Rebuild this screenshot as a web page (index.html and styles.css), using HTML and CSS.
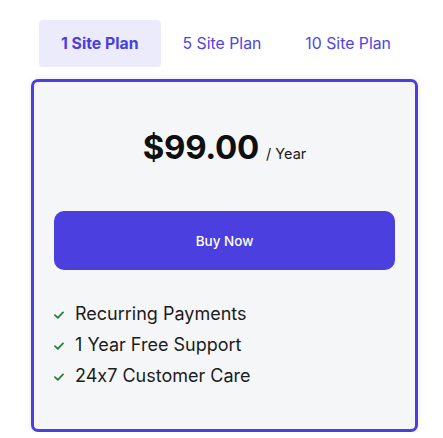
FILE: index.html
```html
<!DOCTYPE html>
<html>
<head>
<meta charset="utf-8">
<link rel="stylesheet" href="styles.css">
</head>
<body>
<div class="wrap">
  <div class="tabs">
    <div class="tab active">1 Site Plan</div>
    <div class="tab">5 Site Plan</div>
    <div class="tab">10 Site Plan</div>
  </div>
  <div class="card">
    <div class="price"><span class="amount">$99.00</span><span class="per">/ Year</span></div>
    <button class="buy">Buy Now</button>
    <ul class="features">
      <li><svg class="check" viewBox="0 0 10 8" width="10" height="8"><path d="M1 4.2 L3.8 6.8 L9 1.4" fill="none" stroke="#23803a" stroke-width="1.8" stroke-linecap="round" stroke-linejoin="round"/></svg>Recurring Payments</li>
      <li><svg class="check" viewBox="0 0 10 8" width="10" height="8"><path d="M1 4.2 L3.8 6.8 L9 1.4" fill="none" stroke="#23803a" stroke-width="1.8" stroke-linecap="round" stroke-linejoin="round"/></svg>1 Year Free Support</li>
      <li><svg class="check" viewBox="0 0 10 8" width="10" height="8"><path d="M1 4.2 L3.8 6.8 L9 1.4" fill="none" stroke="#23803a" stroke-width="1.8" stroke-linecap="round" stroke-linejoin="round"/></svg>24x7 Customer Care</li>
    </ul>
  </div>
</div>
</body>
</html>
```
FILE: styles.css
```css
html, body {
  margin: 0;
  padding: 0;
  background: #ffffff;
}
body {
  font-family: "Inter", "Noto Sans", sans-serif;
  font-feature-settings: "calt" 0;
  color: #1a1a1a;
}
.wrap {
  width: 387px;
  margin-left: 31px;
  padding-top: 20px;
}
.tabs {
  display: flex;
  justify-content: center;
  margin-left: 3px;
}
.tab {
  height: 47px;
  line-height: 47px;
  padding: 0 22px;
  border-radius: 4px;
  font-size: 15.8px;
  color: #4f44df;
}
.tab.active {
  background: #ecebfb;
  font-weight: 700;
  color: #4a3fdd;
}
.card {
  margin-top: 12px;
  box-sizing: border-box;
  height: 353px;
  border: 3px solid #4b3fe0;
  border-radius: 7px;
  background: #f5f6f7;
  padding: 0 20px;
  box-shadow: 0 0 8px rgba(0,0,0,0.08);
}
.price {
  text-align: center;
  margin-top: 45px;
  height: 40px;
  line-height: 40px;
}
.amount {
  font-size: 33px;
  font-weight: 700;
  color: #0f0f0f;
  letter-spacing: -0.3px;
}
.per {
  font-size: 14.5px;
  color: #1a1a1a;
  margin-left: 7px;
}
.buy {
  display: block;
  width: 100%;
  height: 59px;
  margin-top: 44px;
  border: none;
  border-radius: 10px;
  background: #4b3fe0;
  color: #ffffff;
  font-family: "Inter", "Noto Sans", sans-serif;
  font-size: 13.5px;
  font-weight: 500;
}
.features {
  list-style: none;
  margin: 28px 0 0;
  padding: 0;
}
.features li {
  display: flex;
  align-items: center;
  height: 31px;
  font-size: 18px;
  color: #1c1c1c;
}
.check {
  margin-right: 11px;
  margin-top: 3px;
}
```
